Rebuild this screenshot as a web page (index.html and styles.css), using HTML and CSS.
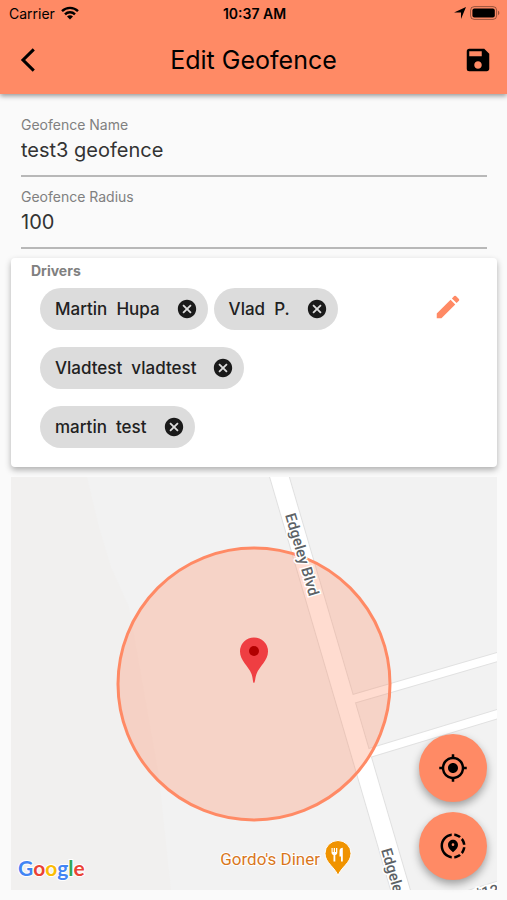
FILE: index.html
```html
<!DOCTYPE html>
<html lang="en">
<head>
    <meta charset="UTF-8">
    <meta name="viewport" content="width=device-width, initial-scale=1.0">
    <title>Edit Geofence</title>
    <link rel="stylesheet" href="styles.css">
</head>
<body>
    <header class="header">
        <div class="status-bar">
            <div class="status-left">
                <span>Carrier</span>
                <svg width="18" height="14" viewBox="0 0 18 14">
                    <g fill="none" stroke="#000" stroke-width="2.4">
                        <path d="M1 5.2a11.4 11.4 0 0 1 16 0"/>
                        <path d="M4 8.3a7.1 7.1 0 0 1 10 0"/>
                    </g>
                    <path d="M9 13.6 6 10.6a4.3 4.3 0 0 1 6 0z"/>
                </svg>
            </div>
            <span class="time">10:37 AM</span>
            <div class="status-right">
                <svg width="12" height="12" viewBox="0 0 12 12"><path d="M12 0 7 12V5.600H0z"/></svg>
                <svg width="30" height="14" viewBox="0 0 30 14">
                    <rect x=".6" y=".6" width="26" height="12.8" rx="3.6" fill="none" stroke="#000" stroke-opacity=".4"/>
                    <rect x="2.4" y="2.4" width="22.4" height="9.2" rx="2"/>
                    <path d="M28 4.8c1.8.6 1.8 3.8 0 4.4z" fill-opacity=".4"/>
                </svg>
            </div>
        </div>
        <div class="nav-bar">
            <button class="icon-button" aria-label="Back">
                <svg width="28" height="28" viewBox="0 0 24 24"><path d="M17 3.800 15.200 2 5 12l10.200 10 1.800-1.800L8.700 12z"/></svg>
            </button>
            <h1>Edit Geofence</h1>
            <button class="icon-button" aria-label="Save">
                <svg width="30" height="30" viewBox="0 0 24 24"><path d="M17 3H5a2 2 0 0 0-2 2v14a2 2 0 0 0 2 2h14c1.100 0 2-.9 2-2V7l-4-4zm-5 16c-1.660 0-3-1.340-3-3s1.340-3 3-3 3 1.340 3 3-1.340 3-3 3zm3-10H5V5h10v4z"/></svg>
            </button>
        </div>
    </header>

    <main class="content">
        <form class="fields">
            <div class="field">
                <label for="name">Geofence Name</label>
                <input id="name" type="text" value="test3 geofence">
            </div>
            <div class="field">
                <label for="radius">Geofence Radius</label>
                <input id="radius" type="text" inputmode="numeric" value="100">
            </div>
        </form>

        <section class="card">
            <h2>Drivers</h2>
            <div class="card-body">
                <ul class="chips">
                    <li class="chip">Martin&nbsp; Hupa
                        <button aria-label="Remove Martin Hupa"><svg width="22" height="22" viewBox="0 0 24 24"><use href="#cancel"/></svg></button>
                    </li>
                    <li class="chip">Vlad&nbsp; P.
                        <button aria-label="Remove Vlad P."><svg width="22" height="22" viewBox="0 0 24 24"><use href="#cancel"/></svg></button>
                    </li>
                    <li class="chip">Vladtest&nbsp; vladtest
                        <button aria-label="Remove Vladtest vladtest"><svg width="22" height="22" viewBox="0 0 24 24"><use href="#cancel"/></svg></button>
                    </li>
                    <li class="chip">martin&nbsp; test
                        <button aria-label="Remove martin test"><svg width="22" height="22" viewBox="0 0 24 24"><use href="#cancel"/></svg></button>
                    </li>
                </ul>
                <button class="edit-button" aria-label="Edit drivers">
                    <svg width="30" height="30" viewBox="0 0 24 24"><path d="M3 17.250V21h3.750L17.810 9.940l-3.750-3.750L3 17.250zM20.710 7.040a1 1 0 0 0 0-1.410l-2.340-2.340a1 1 0 0 0-1.410 0l-1.830 1.830 3.750 3.750 1.830-1.830z"/></svg>
                </button>
            </div>
        </section>

        <section class="map">
            <svg class="map-canvas" viewBox="0 0 486 413" preserveAspectRatio="xMidYMid slice">
                <rect width="486" height="413" fill="#f2f2f2"/>
                <path d="M0 0h76l12 50 12 40 18 40 30 170 12 113H0z" fill="#f1f0ef"/>
                <!-- road outlines, then the white surface -->
                <g fill="none" stroke="#e1e1e1">
                    <path d="M267 -5 391 418" stroke-width="20"/>
                    <path d="M342 222 490 179" stroke-width="10"/>
                    <path d="M355 277 490 236" stroke-width="10"/>
                    <path d="M455 424 490 413" stroke-width="20"/>
                </g>
                <g fill="none" stroke="#fff">
                    <path d="M267 -5 391 418" stroke-width="18"/>
                    <path d="M342 222 490 179" stroke-width="8"/>
                    <path d="M355 277 490 236" stroke-width="8"/>
                    <path d="M455 424 490 413" stroke-width="18"/>
                </g>
                <circle cx="243" cy="207" r="136" fill="#ff8a65" fill-opacity=".3" stroke="#ff8a65" stroke-width="3"/>
                <g class="road-name">
                    <text transform="translate(274 38) rotate(73.500)">Edgeley Blvd</text>
                    <text transform="translate(370 373) rotate(73.500)">Edgeley Blvd</text>
                    <text transform="translate(465 422) rotate(-10)">*125</text>
                </g>
                <!-- geofence centre -->
                <path d="M243 206c-1.200 0-1-5-2.500-9-3-8-11.500-13.500-11.500-22.500a14 14 0 0 1 28 0c0 9-8.500 14.500-11.500 22.500-1.500 4-1.300 9-2.500 9z" fill="#ef3e42"/>
                <circle cx="243" cy="174" r="5" fill="#b10000"/>
                <!-- restaurant -->
                <text class="place-name" x="309" y="388" text-anchor="end">Gordo's Diner</text>
                <path d="M327 399c-2-8-13-13-13-22.500a13 13 0 0 1 26 0c0 9.500-11 14.500-13 22.500z" fill="#f09300" stroke="#fff" stroke-width="1"/>
                <path d="M320.500 371v4.500c0 1.500 1 2.200 2 2.400v6.600h1.800v-6.600c1-.2 2-.9 2-2.400V371h-1.300v4h-1v-4h-1.300v4h-1v-4zM328.500 374c0-2 1.500-3.200 3.300-3.200v13.700H330v-5h-1.500z" fill="#fff"/>
                <text class="logo" x="7" y="399"><tspan fill="#4285f4">G</tspan><tspan fill="#ea4335">o</tspan><tspan fill="#fbbc05">o</tspan><tspan fill="#4285f4">g</tspan><tspan fill="#34a853">l</tspan><tspan fill="#ea4335">e</tspan></text>
            </svg>
            <div class="map-actions">
                <button aria-label="My location">
                    <svg width="30" height="30" viewBox="0 0 24 24"><path d="M12 8c-2.210 0-4 1.790-4 4s1.790 4 4 4 4-1.790 4-4-1.790-4-4-4zm8.940 3A8.990 8.990 0 0 0 13 3.060V1h-2v2.060A8.990 8.990 0 0 0 3.060 11H1v2h2.060A8.990 8.990 0 0 0 11 20.940V23h2v-2.060A8.990 8.990 0 0 0 20.940 13H23v-2h-2.060zM12 19c-3.870 0-7-3.130-7-7s3.130-7 7-7 7 3.130 7 7-3.130 7-7 7z"/></svg>
                </button>
                <button aria-label="Center on geofence">
                    <svg width="30" height="30" viewBox="0 0 24 24"><path d="M13.020 19.930v2.020c2.010-.2 3.840-1 5.320-2.210l-1.420-1.430c-1.110.86-2.440 1.440-3.900 1.620zM4.030 12c0-4.050 3.030-7.410 6.950-7.930V2.050C5.950 2.580 2.030 6.840 2.030 12s3.920 9.420 8.950 9.950v-2.020C7.060 19.410 4.030 16.050 4.030 12zm15.920-1h2.020c-.2-2.010-1-3.840-2.210-5.320l-1.430 1.430c.86 1.100 1.440 2.430 1.620 3.890zm-1.610-6.740c-1.480-1.210-3.320-2.010-5.320-2.210v2.020c1.460.18 2.790.76 3.900 1.620l1.420-1.430zm-.01 12.640 1.430 1.420c1.210-1.480 2.010-3.310 2.210-5.320h-2.020c-.18 1.460-.76 2.790-1.620 3.900zM16 11.100C16 8.610 14.100 7 12 7s-4 1.610-4 4.100c0 1.660 1.330 3.630 4 5.900 2.670-2.270 4-4.240 4-5.900zm-4 .9a1.070 1.070 0 1 1 0-2.140A1.070 1.070 0 0 1 12 12z"/></svg>
                </button>
            </div>
        </section>
    </main>

    <svg width="0" height="0" class="symbols">
        <symbol id="cancel" viewBox="0 0 24 24"><path d="M12 2C6.470 2 2 6.470 2 12s4.470 10 10 10 10-4.470 10-10S17.530 2 12 2zm5 13.590L15.590 17 12 13.410 8.410 17 7 15.590 10.590 12 7 8.410 8.410 7 12 10.590 15.590 7 17 8.410 13.410 12 17 15.590z"/></symbol>
    </svg>
</body>
</html>
```

FILE: styles.css
```css
* {
    box-sizing: border-box;
}
body {
    font-family: Inter, "Liberation Sans", sans-serif;
    margin: 0;
    min-height: 100vh;
    display: flex;
    flex-direction: column;
    background: #fafafa;
    color: #212121;
}
button {
    display: flex;
    align-items: center;
    justify-content: center;
    padding: 0;
    border: none;
    background: none;
    cursor: pointer;
}
svg {
    display: block;
}
.symbols {
    position: absolute;
}
.header {
    background: #ff8a65;
    color: #000;
    box-shadow: 0 2px 5px rgba(0, 0, 0, 0.4);
}
.status-bar {
    display: grid;
    grid-template-columns: 1fr auto 1fr;
    align-items: center;
    height: 26px;
    padding: 0 7px 0 9px;
    font-size: 14px;
}
.status-left,
.status-right {
    display: flex;
    align-items: center;
    gap: 6px;
}
.status-right {
    justify-content: flex-end;
    gap: 4px;
}
.time {
    font-weight: 600;
}
.nav-bar {
    display: flex;
    align-items: center;
    justify-content: space-between;
    height: 68px;
    padding: 0 14px;
}
.nav-bar h1 {
    margin: 0;
    font-size: 25px;
    font-weight: 400;
}
.icon-button {
    width: 30px;
    height: 30px;
}
.content {
    flex: 1;
    display: flex;
    flex-direction: column;
    padding: 14px 10px 10px 11px;
}
.fields {
    padding: 0 10px;
}
.field {
    display: flex;
    flex-direction: column;
    height: 72px;
    padding-top: 8px;
}
.field label {
    font-size: 14px;
    line-height: 18px;
    color: #808080;
}
.field input {
    height: 43px;
    padding: 0 0 10px;
    border: none;
    border-bottom: 2px solid #b8b8b8;
    outline: none;
    background: none;
    font-family: inherit;
    font-size: 20px;
    color: #333;
}
.card {
    margin: 6px 0 10px;
    padding: 4px 34px 19px 20px;
    border-radius: 4px;
    background: #fff;
    box-shadow: 0 3px 6px rgba(0, 0, 0, 0.3);
}
.card h2 {
    margin: 0;
    font-size: 14px;
    font-weight: 700;
    line-height: 18px;
    color: #808080;
}
.card-body {
    display: flex;
    align-items: flex-start;
    justify-content: space-between;
    padding: 8px 0 0 9px;
}
.chips {
    display: flex;
    flex-wrap: wrap;
    gap: 17px 6px;
    max-width: 340px;
    margin: 0;
    padding: 0;
    list-style: none;
}
.chip {
    display: flex;
    align-items: center;
    gap: 16px;
    height: 42px;
    padding: 0 10px 0 15px;
    border-radius: 21px;
    background: #dcdcdc;
    font-size: 17px;
    font-weight: 500;
}
.chip svg {
    fill: #1a1a1a;
}
.edit-button {
    margin-top: 4px;
}
.edit-button svg {
    fill: #ff8a65;
}
.map {
    position: relative;
    flex: 1;
    min-height: 300px;
}
.map-canvas {
    position: absolute;
    width: 100%;
    height: 100%;
}
.map-actions {
    position: absolute;
    right: 10px;
    bottom: 10px;
    display: flex;
    flex-direction: column;
    gap: 10px;
}
.map-actions button {
    width: 68px;
    height: 68px;
    border-radius: 50%;
    background: #ff8a65;
    box-shadow: 0 4px 8px rgba(0, 0, 0, 0.35);
}
.road-name {
    font-family: Roboto, sans-serif;
    font-size: 15px;
    font-weight: 500;
    fill: #5c6266;
    stroke: #fff;
    stroke-width: 3px;
    paint-order: stroke;
}
.place-name {
    font-family: Roboto, sans-serif;
    font-size: 17px;
    fill: #d9771c;
    stroke: #fff;
    stroke-width: 2px;
    paint-order: stroke;
}
.logo {
    font-family: Lato, sans-serif;
    font-size: 21px;
    font-weight: 700;
    stroke: #fff;
    stroke-width: 2px;
    paint-order: stroke;
}
```
